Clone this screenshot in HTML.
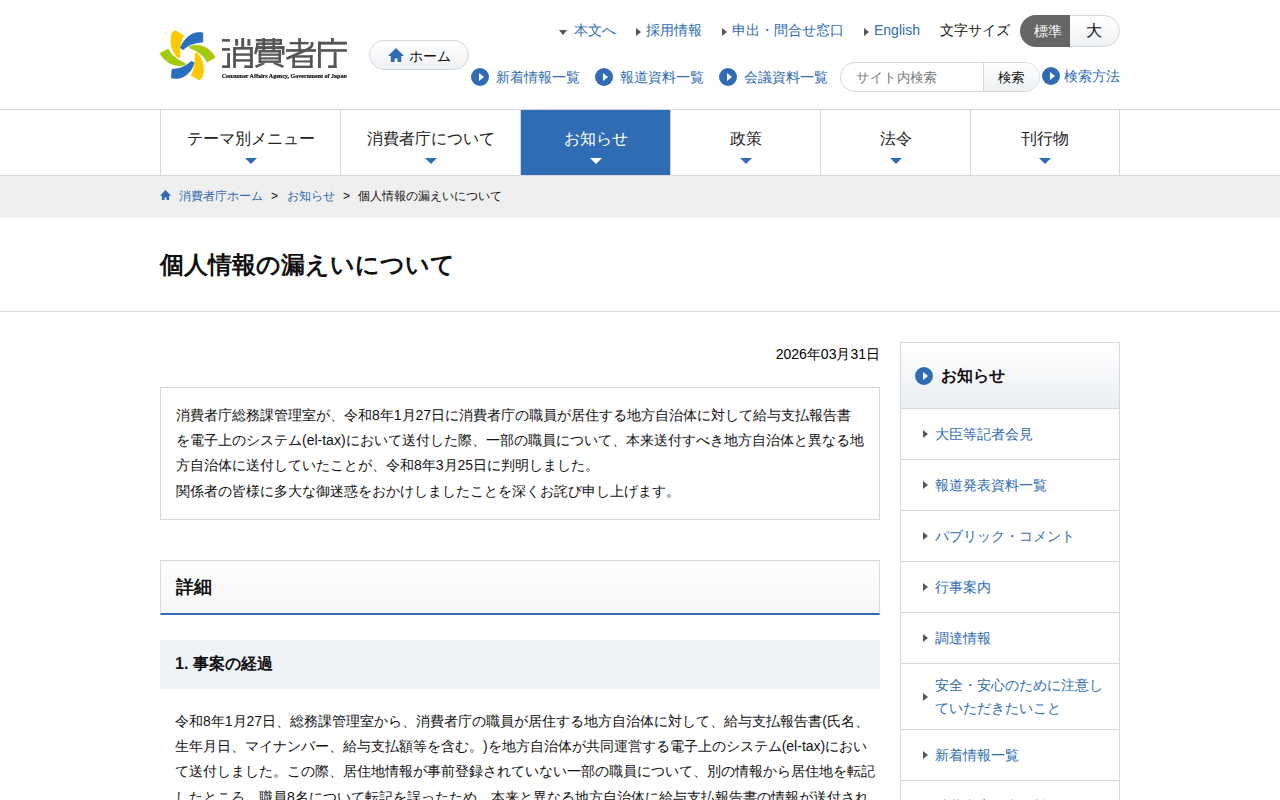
<!DOCTYPE html>
<html lang="ja">
<head>
<meta charset="utf-8">
<title>個人情報の漏えいについて | 消費者庁</title>
<style>
*{box-sizing:border-box;margin:0;padding:0}
html,body{width:1280px;height:800px;overflow:hidden;background:#fff}
body{font-family:"Liberation Sans",sans-serif;color:#000;font-size:14px;position:relative}
a{color:#2f6cb3;text-decoration:none}
.abs{position:absolute;white-space:nowrap}

/* header */
#hdr{position:absolute;left:0;top:0;width:1280px;height:110px;border-bottom:1px solid #d3d8dd;background:#fff}
.tl{position:absolute;top:20px;font-size:14px;line-height:20px;white-space:nowrap}
.tri-d{position:absolute;width:0;height:0;border-left:4px solid transparent;border-right:4px solid transparent;border-top:5px solid #555}
.tri-r{position:absolute;width:0;height:0;border-top:4px solid transparent;border-bottom:4px solid transparent;border-left:5px solid #555}
.pill{position:absolute;border:1px solid #d4d7da;border-radius:16px;background:linear-gradient(#fff,#eef1f4)}
.circ{position:absolute;width:18px;height:18px;border-radius:50%;background:#2f6cb3}
.circ:after{content:"";position:absolute;left:8px;top:4.5px;border-top:4.5px solid transparent;border-bottom:4.5px solid transparent;border-left:5px solid #fff}
.l2{position:absolute;top:67px;font-size:14px;line-height:20px;white-space:nowrap}

/* nav */
#nav{position:absolute;left:160px;top:110px;width:960px;height:65px;border-left:1px solid #d3d8dd}
.ni{position:absolute;top:0;height:65px;border-right:1px solid #d3d8dd;text-align:center;font-size:16px;line-height:24px;padding-top:17px;color:#222}
.ni:after{content:"";position:absolute;left:50%;margin-left:-6px;top:48px;border-left:6px solid transparent;border-right:6px solid transparent;border-top:6px solid #2f6cb3}
.ni.on{background:#2f6cb3;color:#fff}
.ni.on:after{border-top-color:#fff}
#navline{position:absolute;left:0;top:175px;width:1280px;height:1px;background:#d3d8dd}

/* breadcrumb */
#bc{position:absolute;left:0;top:176px;width:1280px;height:42px;background:#efefef;font-size:12px;line-height:18px}

/* title */
#ttl{position:absolute;left:160px;top:247px;font-size:24px;line-height:36px;font-weight:bold;color:#111;white-space:nowrap}
#ttlline{position:absolute;left:0;top:311px;width:1280px;height:1px;background:#dcdcdc}

/* main */
#date{position:absolute;left:160px;width:720px;top:344px;text-align:right;font-size:14px;line-height:20px;color:#000}
#box{position:absolute;left:160px;top:387px;width:720px;height:133px;border:1px solid #d8d8d8;padding:15px 15px 13px;font-size:14px;line-height:25.2px;color:#111}
#h2{position:absolute;left:160px;top:560px;width:720px;height:55px;border:1px solid #d6dade;border-bottom:2px solid #2f6cb3;background:linear-gradient(#fdfdfd,#f8f8f8);font-size:18px;font-weight:bold;line-height:26px;padding:13px 15px;color:#111}
#h3{position:absolute;left:160px;top:640px;width:720px;height:49px;background:#eef3f8;font-size:16px;font-weight:bold;line-height:24px;padding:12px 15px;color:#111}
#para{position:absolute;left:175px;top:709px;width:705px;font-size:14px;line-height:25.2px;color:#111}

/* sidebar */
#side{position:absolute;left:900px;top:342px;width:220px;height:470px;border:1px solid #d5d9dd;background:#fff}
#sh{position:absolute;left:0;top:0;width:218px;height:66px;background:linear-gradient(#fff,#eaeef2);border-bottom:1px solid #d5d9dd}
.si{position:absolute;left:0;width:218px;border-bottom:1px solid #d5d9dd;font-size:14px;line-height:23px;padding-left:34px;white-space:nowrap}
.si:before{content:"";position:absolute;left:22px;top:50%;margin-top:-4px;border-top:4px solid transparent;border-bottom:4px solid transparent;border-left:5px solid #585858}
</style>
</head>
<body>

<div id="hdr">
  <!-- logo placeholder -->
  <svg class="abs" style="left:157px;top:27px" width="62" height="56" viewBox="0 0 886 800">
    <path fill="#fdc900" stroke="#fdc900" stroke-width="11" stroke-linejoin="round" d="M215,85 Q235,60 270,55 L380,125 C340,200 315,300 330,430 L300,440 C210,340 175,220 215,85 Z"/>
    <path fill="#2b6fba" stroke="#2b6fba" stroke-width="11" stroke-linejoin="round" d="M655,85 C520,55 390,150 335,300 L375,325 C440,260 540,220 655,215 Z"/>
    <path fill="#a4cb08" stroke="#a4cb08" stroke-width="11" stroke-linejoin="round" d="M465,280 C600,225 770,300 830,435 L715,500 C670,410 580,340 475,305 Z"/>
    <path fill="#fdc900" stroke="#fdc900" stroke-width="11" stroke-linejoin="round" d="M545,378 L572,372 C660,460 690,600 640,730 L600,755 L490,690 C545,590 545,480 545,378 Z"/>
    <path fill="#2b6fba" stroke="#2b6fba" stroke-width="11" stroke-linejoin="round" d="M490,490 L530,510 C500,650 360,770 205,725 L215,605 C330,600 420,560 490,490 Z"/>
    <path fill="#a4cb08" stroke="#a4cb08" stroke-width="11" stroke-linejoin="round" d="M45,375 L160,315 C210,410 300,480 395,515 L400,540 C270,580 110,510 45,375 Z"/>
  </svg>
  <svg class="abs" style="left:218px;top:32px;will-change:transform" width="134" height="52" viewBox="0 0 1280 497">
    <g fill="#555" stroke="none">
      <!-- 消 -->
      <g transform="translate(0,19.1) scale(0.5075)">
        <rect x="75" y="95" width="150" height="50"/>
        <rect x="75" y="265" width="150" height="50"/>
        <rect x="172" y="360" width="53" height="280"/>
        <rect x="75" y="590" width="150" height="50"/>
        <rect x="322" y="95" width="56" height="125"/>
        <rect x="437" y="75" width="56" height="175"/>
        <rect x="552" y="95" width="56" height="125"/>
        <rect x="285" y="245" width="52" height="395"/>
        <rect x="600" y="245" width="55" height="395"/>
        <rect x="285" y="245" width="370" height="50"/>
        <rect x="285" y="365" width="370" height="45"/>
        <rect x="285" y="475" width="370" height="45"/>
        <rect x="495" y="590" width="160" height="50"/>
      </g>
      <!-- 費 者 -->
      <g transform="translate(324.8,19.1) scale(0.5075)">
        <rect x="70" y="95" width="495" height="45"/>
        <rect x="100" y="165" width="465" height="40"/>
        <rect x="70" y="228" width="540" height="55"/>
        <rect x="195" y="75" width="50" height="230"/>
        <rect x="385" y="75" width="48" height="230"/>
        <rect x="520" y="95" width="45" height="110"/>
        <rect x="75" y="165" width="45" height="90"/>
        <path d="M70,250 L122,272 L78,388 L36,362 Z"/>
        <rect x="562" y="228" width="48" height="165"/>
        <rect x="125" y="300" width="48" height="243"/>
        <rect x="495" y="300" width="50" height="243"/>
        <rect x="125" y="300" width="420" height="45"/>
        <rect x="125" y="378" width="420" height="32"/>
        <rect x="125" y="440" width="420" height="30"/>
        <rect x="125" y="508" width="420" height="35"/>
        <rect x="173" y="345" width="322" height="33" opacity=".45"/>
        <rect x="173" y="470" width="322" height="38" opacity=".5"/>
        <rect x="115" y="140" width="405" height="25" opacity=".55"/>
        <path d="M195,540 L255,562 L78,640 L55,595 Z"/>
        <path d="M395,562 L430,530 L602,595 L580,640 Z"/>
        <rect x="870" y="75" width="50" height="230"/>
        <rect x="710" y="150" width="355" height="45"/>
        <rect x="640" y="285" width="565" height="50"/>
        <path d="M1130,150 L1132,195 Q1128,250 1040,292 L650,468" fill="none" stroke="#555" stroke-width="52"/>
        <rect x="760" y="400" width="50" height="240"/>
        <rect x="1090" y="400" width="50" height="240"/>
        <rect x="760" y="400" width="380" height="45"/>
        <rect x="760" y="498" width="380" height="38"/>
        <rect x="760" y="595" width="380" height="45"/>
      </g>
      <!-- 庁 -->
      <g transform="translate(630.4,19.1) scale(0.5075)">
        <rect x="885" y="75" width="55" height="75"/>
        <rect x="640" y="145" width="545" height="55"/>
        <rect x="640" y="145" width="55" height="495"/>
        <rect x="690" y="285" width="495" height="50"/>
        <rect x="935" y="335" width="55" height="305"/>
        <rect x="830" y="590" width="160" height="50"/>
      </g>
    </g>
    <text x="35" y="436" font-family="Liberation Serif, serif" font-weight="bold" font-size="54" fill="#1a1a1a" stroke="#1a1a1a" stroke-width="2" textLength="1196" lengthAdjust="spacingAndGlyphs">Consumer Affairs Agency, Government of Japan</text>
  </svg>

  <div class="pill" style="left:369px;top:40px;width:100px;height:30px"></div>
  <svg class="abs" style="left:388px;top:48px" width="16" height="14" viewBox="0 0 16 14"><path fill="#2f6cb3" d="M8,0 L16,8 L13.2,8 L13.2,14 L9.5,14 L9.5,10.6 L6.6,10.6 L6.6,14 L2.8,14 L2.8,8 L0,8 Z"/></svg>
  <div class="abs" style="left:409px;top:46px;font-size:14px;line-height:20px;color:#111">ホーム</div>

  <div class="tri-d" style="left:559px;top:30px"></div>
  <a class="tl" style="left:574px">本文へ</a>
  <div class="tri-r" style="left:636px;top:28px"></div>
  <a class="tl" style="left:646px">採用情報</a>
  <div class="tri-r" style="left:722px;top:28px"></div>
  <a class="tl" style="left:732px">申出・問合せ窓口</a>
  <div class="tri-r" style="left:864px;top:28px"></div>
  <a class="tl" style="left:874px;top:20px">English</a>
  <div class="tl" style="left:940px;color:#111">文字サイズ</div>

  <div class="pill" style="left:1020px;top:15px;width:100px;height:32px"></div>
  <div class="abs" style="left:1020px;top:15px;width:50px;height:32px;border-radius:16px 0 0 16px;background:#666;color:#fff;font-size:14px;line-height:32px;padding-left:14px">標準</div>
  <div class="abs" style="left:1069px;top:15px;width:49px;height:32px;text-align:center;font-size:16px;line-height:32px;color:#111">大</div>

  <div class="circ" style="left:471px;top:68px"></div>
  <a class="l2" style="left:496px">新着情報一覧</a>
  <div class="circ" style="left:595px;top:68px"></div>
  <a class="l2" style="left:620px">報道資料一覧</a>
  <div class="circ" style="left:719px;top:68px"></div>
  <a class="l2" style="left:744px">会議資料一覧</a>

  <div class="abs" style="left:840px;top:62px;width:200px;height:30px;border:1px solid #d4d7da;border-radius:15px;background:#fff"></div>
  <div class="abs" style="left:983px;top:63px;width:56px;height:28px;border-left:1px solid #d4d7da;border-radius:0 14px 14px 0;background:linear-gradient(#fff,#eef1f4)"></div>
  <div class="abs" style="left:856px;top:68px;font-size:13.3333px;text-rendering:geometricPrecision;line-height:20px;color:#777">サイト内検索</div>
  <div class="abs" style="left:998px;top:68px;font-size:13.3333px;text-rendering:geometricPrecision;line-height:20px;color:#111">検索</div>
  <div class="circ" style="left:1042px;top:67px"></div>
  <a class="l2" style="left:1064px;top:66px">検索方法</a>
</div>

<div id="nav">
  <div class="ni" style="left:0;width:180px">テーマ別メニュー</div>
  <div class="ni" style="left:180px;width:180px">消費者庁について</div>
  <div class="ni on" style="left:360px;width:150px">お知らせ</div>
  <div class="ni" style="left:510px;width:150px">政策</div>
  <div class="ni" style="left:660px;width:150px">法令</div>
  <div class="ni" style="left:809px;width:150px">刊行物</div>
</div>
<div id="navline"></div>

<div id="bc">
  <svg class="abs" style="left:160px;top:14px" width="11" height="10" viewBox="0 0 16 14" preserveAspectRatio="none"><path fill="#2f6cb3" d="M8,0 L16,8 L13.2,8 L13.2,14 L9.5,14 L9.5,10.6 L6.6,10.6 L6.6,14 L2.8,14 L2.8,8 L0,8 Z"/></svg>
  <a class="abs" style="left:179px;top:11px">消費者庁ホーム</a>
  <span class="abs" style="left:271px;top:11px;color:#111">&gt;</span>
  <a class="abs" style="left:287px;top:11px">お知らせ</a>
  <span class="abs" style="left:343px;top:11px;color:#111">&gt;</span>
  <span class="abs" style="left:358px;top:11px;color:#111">個人情報の漏えいについて</span>
</div>

<div id="ttl">個人情報の漏えいについて</div>
<div id="ttlline"></div>

<div id="date">2026年03月31日</div>
<div id="box">消費者庁総務課管理室が、令和8年1月27日に消費者庁の職員が居住する地方自治体に対して給与支払報告書を電子上のシステム(el-tax)において送付した際、一部の職員について、本来送付すべき地方自治体と異なる地方自治体に送付していたことが、令和8年3月25日に判明しました。<br>関係者の皆様に多大な御迷惑をおかけしましたことを深くお詫び申し上げます。</div>

<div id="h2">詳細</div>
<div id="h3">1. 事案の経過</div>
<div id="para">令和8年1月27日、総務課管理室から、消費者庁の職員が居住する地方自治体に対して、給与支払報告書(氏名、生年月日、マイナンバー、給与支払額等を含む。)を地方自治体が共同運営する電子上のシステム(el-tax)において送付しました。この際、居住地情報が事前登録されていない一部の職員について、別の情報から居住地を転記したところ、職員8名について転記を誤ったため、本来と異なる地方自治体に給与支払報告書の情報が送付されました。</div>

<div id="side">
  <div id="sh">
    <div class="circ" style="left:14px;top:24px"></div>
    <div class="abs" style="left:40px;top:21px;font-size:16px;font-weight:bold;line-height:24px;color:#111">お知らせ</div>
  </div>
  <a class="si" style="top:66px;height:51px;padding-top:14px">大臣等記者会見</a>
  <a class="si" style="top:117px;height:51px;padding-top:14px">報道発表資料一覧</a>
  <a class="si" style="top:168px;height:51px;padding-top:14px">パブリック・コメント</a>
  <a class="si" style="top:219px;height:51px;padding-top:14px">行事案内</a>
  <a class="si" style="top:270px;height:51px;padding-top:14px">調達情報</a>
  <a class="si" style="top:321px;height:66px;padding-top:10px">安全・安心のために注意し<br>ていただきたいこと</a>
  <a class="si" style="top:387px;height:51px;padding-top:14px">新着情報一覧</a>
  <a class="si" style="top:438px;height:51px;padding-top:14px">消費者庁公表資料一覧</a>
</div>

</body>
</html>
